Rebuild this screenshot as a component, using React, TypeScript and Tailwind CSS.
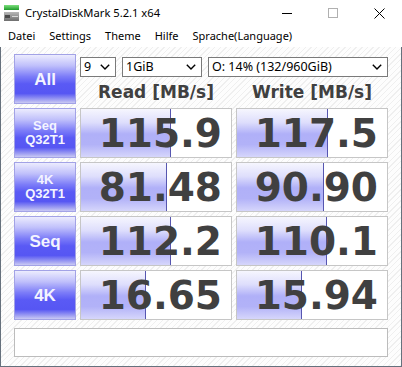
import React from 'react'

interface ResultRow {
  label: string[]
  read: string
  write: string
  readBar: number
  writeBar: number
}

const results: ResultRow[] = [
  { label: ['Seq', 'Q32T1'], read: '115.9', write: '117.5', readBar: 90, writeBar: 91 },
  { label: ['4K', 'Q32T1'], read: '81.48', write: '90.90', readBar: 86, writeBar: 87 },
  { label: ['Seq'], read: '112.2', write: '110.1', readBar: 90, writeBar: 90 },
  { label: ['4K'], read: '16.65', write: '15.94', readBar: 65, writeBar: 65 },
]

const menuItems = ['Datei', 'Settings', 'Theme', 'Hilfe', 'Sprache(Language)']

const DriveIcon = () => (
  <svg width="16" height="17" viewBox="0 0 16 17" className="ml-[4px]">
    <defs>
      <linearGradient id="grn" x1="0" y1="0" x2="0" y2="1">
        <stop offset="0" stopColor="#7ee07e" />
        <stop offset="1" stopColor="#1e9a2a" />
      </linearGradient>
      <linearGradient id="gry" x1="0" y1="0" x2="0" y2="1">
        <stop offset="0" stopColor="#b8b8b8" />
        <stop offset="1" stopColor="#6e6e6e" />
      </linearGradient>
    </defs>
    <rect x="0" y="0" width="15" height="5" fill="url(#grn)" />
    <rect x="0" y="7" width="15" height="9" fill="url(#gry)" />
    <rect x="1" y="10" width="5" height="3" fill="#4a4a4a" />
    <rect x="8" y="11" width="6" height="1" fill="#d8d8d8" />
  </svg>
)

const Chevron = () => (
  <svg width="10" height="6" viewBox="0 0 10 6" className="shrink-0">
    <path d="M0.8 0.8 L5 5 L9.2 0.8" fill="none" stroke="#000" strokeWidth="1.4" />
  </svg>
)

const TestButton: React.FC<{ label: string[] }> = ({ label }) => (
  <div className="h-full border border-[#a2a2e6] bg-[linear-gradient(to_bottom,#ececfe_0%,#c0c0fb_22%,#7c7cf8_45%,#5a5af5_60%,#5656f3_80%,#9a9af2_92%,#cacaf4_100%)] flex flex-col items-center justify-center font-['Liberation_Sans',Arial,sans-serif] font-bold text-[#f4f4ff]">
    {label.length === 1 ? (
      <span className="text-[17px] leading-none">{label[0]}</span>
    ) : (
      label.map((l) => (
        <span key={l} className="text-[13px] leading-[14px]">
          {l}
        </span>
      ))
    )}
  </div>
)

const ResultCell: React.FC<{ value: string; bar: number }> = ({ value, bar }) => (
  <div className="relative h-full border border-[#c6c6c6] bg-white">
    <div
      className="absolute left-0 top-0 bottom-0 border-r border-[#5656b0] bg-[linear-gradient(to_bottom,#f6f6fe_0%,#dedefc_28%,#b0b0f8_52%,#b2b2f8_74%,#d6d6fb_100%)]"
      style={{ width: bar }}
    />
    <div className="relative h-full flex items-center justify-end pr-[9px] font-['DejaVu_Sans',Verdana,sans-serif] font-bold text-[39px] leading-none text-[#404040]">
      {value}
    </div>
  </div>
)

export default function App() {
  return (
    <div className="w-[402px] h-[367px] bg-white flex flex-col overflow-hidden font-['Noto_Sans',sans-serif] text-black">
      {/* Title bar */}
      <div className="h-[26px] flex items-center shrink-0">
        <DriveIcon />
        <span className="ml-[5px] text-[11.2px] leading-none">CrystalDiskMark 5.2.1 x64</span>
        <div className="ml-auto flex h-full">
          <div className="w-[46px] flex items-center justify-center">
            <div className="w-[10px] h-px bg-black" />
          </div>
          <div className="w-[46px] flex items-center justify-center">
            <div className="w-[10px] h-[10px] border border-[#b0b0b0]" />
          </div>
          <div className="w-[46px] flex items-center justify-center">
            <svg width="11" height="11" viewBox="0 0 11 11">
              <path d="M0.5 0.5 L10.5 10.5 M10.5 0.5 L0.5 10.5" stroke="#000" strokeWidth="1" />
            </svg>
          </div>
        </div>
      </div>

      {/* Menu bar */}
      <div className="h-[21px] flex items-center pl-[1px] shrink-0 text-[11px]">
        {menuItems.map((item) => (
          <span key={item} className="px-[7px]">
            {item}
          </span>
        ))}
      </div>

      {/* Main area */}
      <div className="flex-1 border-x border-b border-[#66717d] bg-[repeating-linear-gradient(135deg,#fdfdfd_0px,#fdfdfd_3px,#efefef_3px,#efefef_4px)] pl-[13px] pr-[13px] pt-[7px]">
        <div className="grid grid-cols-[62px_152px_152px] auto-rows-[50px] gap-x-[4px] gap-y-[4px]">
          <TestButton label={['All']} />
          <div className="col-span-2 flex flex-col">
            <div className="mt-[3px] h-[20px] flex text-[12.5px]">
              <div className="w-[36px] border border-[#7a7a7a] bg-white flex items-center justify-between pl-[3px] pr-[5px]">
                <span>9</span>
                <Chevron />
              </div>
              <div className="ml-[6px] w-[80px] border border-[#7a7a7a] bg-white flex items-center justify-between pl-[3px] pr-[5px]">
                <span>1GiB</span>
                <Chevron />
              </div>
              <div className="ml-[6px] flex-1 border border-[#7a7a7a] bg-white flex items-center justify-between pl-[3px] pr-[5px]">
                <span>O: 14% (132/960GiB)</span>
                <Chevron />
              </div>
            </div>
            <div className="flex-1 grid grid-cols-2 gap-x-[4px] items-center pt-[3px] font-['DejaVu_Sans',Verdana,sans-serif] font-bold text-[17px] text-[#404040]">
              <div className="text-center">Read [MB/s]</div>
              <div className="text-center">Write [MB/s]</div>
            </div>
          </div>

          {results.map((r) => (
            <React.Fragment key={r.label.join('-') + r.read}>
              <TestButton label={r.label} />
              <ResultCell value={r.read} bar={r.readBar} />
              <ResultCell value={r.write} bar={r.writeBar} />
            </React.Fragment>
          ))}
        </div>

        {/* Comment / status box */}
        <div className="mt-[8px] h-[29px] border border-[#bcbcbc] bg-white" />
      </div>
    </div>
  )
}
